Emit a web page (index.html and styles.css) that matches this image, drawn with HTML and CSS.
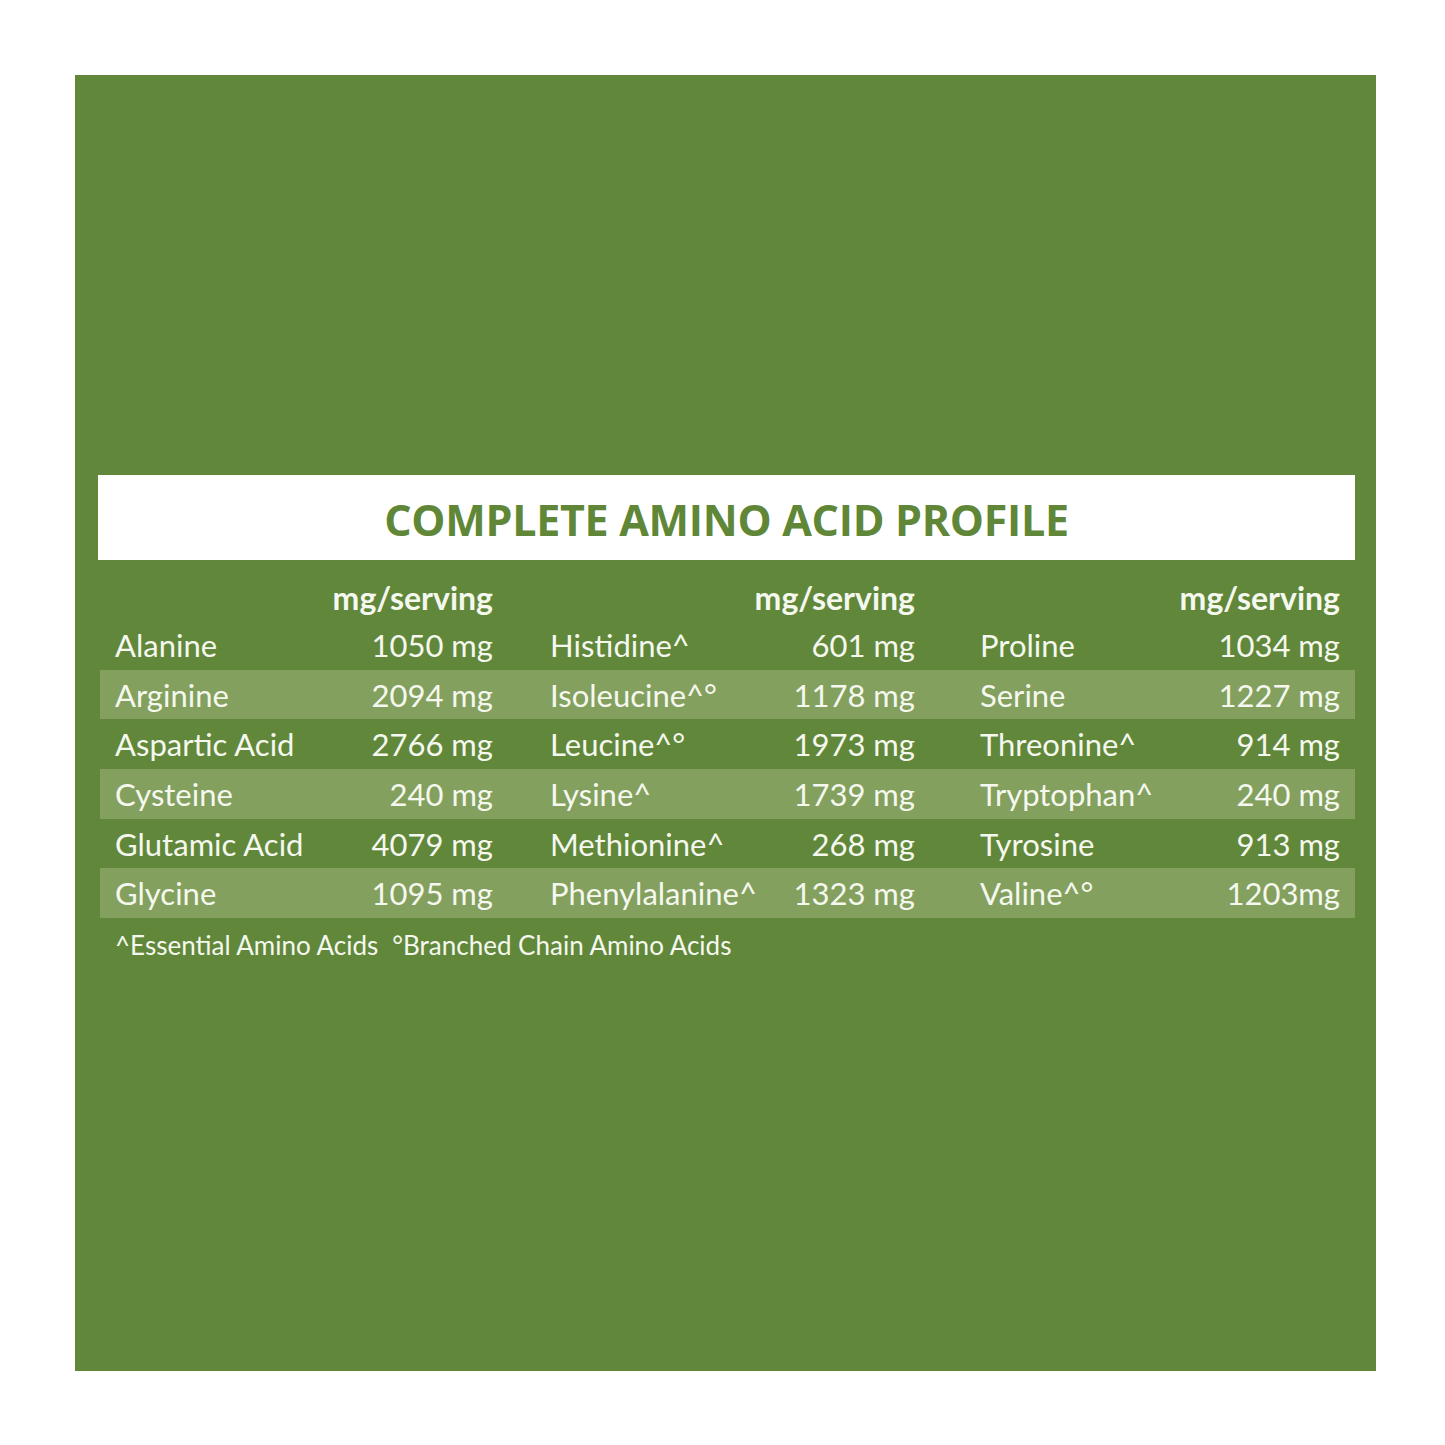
FILE: index.html
```html
<!DOCTYPE html>
<html>
<head>
<meta charset="utf-8">
<link rel="stylesheet" href="styles.css">
</head>
<body>
<div class="panel">
  <div class="title-bar"><h1 class="title">COMPLETE AMINO ACID PROFILE</h1></div>
  <div class="table">
    <div class="row head">
      <div class="grp g1"><span></span><span class="val">mg/serving</span></div>
      <div class="grp g2"><span></span><span class="val">mg/serving</span></div>
      <div class="grp g3"><span></span><span class="val">mg/serving</span></div>
    </div>
    <div class="row">
      <div class="grp g1"><span>Alanine</span><span class="val">1050 mg</span></div>
      <div class="grp g2"><span>Histidine^</span><span class="val">601 mg</span></div>
      <div class="grp g3"><span>Proline</span><span class="val">1034 mg</span></div>
    </div>
    <div class="row alt">
      <div class="grp g1"><span>Arginine</span><span class="val">2094 mg</span></div>
      <div class="grp g2"><span>Isoleucine^°</span><span class="val">1178 mg</span></div>
      <div class="grp g3"><span>Serine</span><span class="val">1227 mg</span></div>
    </div>
    <div class="row">
      <div class="grp g1"><span>Aspartic Acid</span><span class="val">2766 mg</span></div>
      <div class="grp g2"><span>Leucine^°</span><span class="val">1973 mg</span></div>
      <div class="grp g3"><span>Threonine^</span><span class="val">914 mg</span></div>
    </div>
    <div class="row alt">
      <div class="grp g1"><span>Cysteine</span><span class="val">240 mg</span></div>
      <div class="grp g2"><span>Lysine^</span><span class="val">1739 mg</span></div>
      <div class="grp g3"><span>Tryptophan^</span><span class="val">240 mg</span></div>
    </div>
    <div class="row">
      <div class="grp g1"><span>Glutamic Acid</span><span class="val">4079 mg</span></div>
      <div class="grp g2"><span>Methionine^</span><span class="val">268 mg</span></div>
      <div class="grp g3"><span>Tyrosine</span><span class="val">913 mg</span></div>
    </div>
    <div class="row alt">
      <div class="grp g1"><span>Glycine</span><span class="val">1095 mg</span></div>
      <div class="grp g2"><span>Phenylalanine^</span><span class="val">1323 mg</span></div>
      <div class="grp g3"><span>Valine^°</span><span class="val">1203mg</span></div>
    </div>
    <p class="note"><span>^Essential Amino Acids</span><span class="note-b">°Branched Chain Amino Acids</span></p>
  </div>
</div>
</body>
</html>
```
FILE: styles.css
```css
html, body {
  margin: 0;
  padding: 0;
  background: #ffffff;
}
body {
  padding: 75px 0 0 75px;
  font-family: Lato, "Open Sans", sans-serif;
}
.panel {
  width: 1301px;
  height: 1296px;
  background: #61873b;
  box-sizing: border-box;
  padding: 400px 21px 0 23px;
}
.title-bar {
  background: #ffffff;
  height: 85px;
  display: flex;
  align-items: center;
  justify-content: center;
}
.title {
  margin: 0;
  font-family: "Open Sans", sans-serif;
  font-weight: 700;
  font-size: 43px;
  letter-spacing: -0.3px;
  color: #5f8737;
  padding-top: 4px;
}
.table {
  margin-left: 2px;
  color: #f5f8ee;
  font-size: 31px;
}
.row {
  display: flex;
  height: 49.7px;
  align-items: center;
}
.row.head {
  height: 45px;
  margin-top: 15px;
  font-weight: 700;
  font-size: 32px;
}
.row.alt {
  background: #84a05f;
}
.grp {
  display: flex;
  justify-content: space-between;
  align-items: center;
}
.g1 { margin-left: 15px; width: 378px; }
.g2 { margin-left: 57px; width: 365px; }
.g3 { margin-left: 65px; width: 360px; }
.val { text-align: right; }
.note {
  display: flex;
  margin: 11px 0 0 15px;
  font-size: 26px;
}
.note-b { margin-left: 14px; }
```
